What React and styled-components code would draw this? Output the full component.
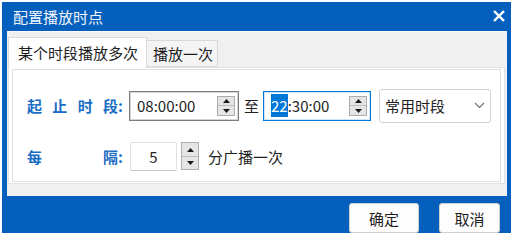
import React from 'react';
import styled, { createGlobalStyle } from 'styled-components';

const GlobalStyle = createGlobalStyle`
  html, body {
    margin: 0;
    padding: 0;
    background: #ffffff;
  }
  body {
    font-family: "Noto Sans CJK SC", "Noto Sans", sans-serif;
    color: #222;
    white-space: nowrap;
  }
`;

const Dialog = styled.div`
  margin: 2px 0 0 2px;
  width: 509px;
  height: 231px;
  background: #0560bd;
  display: flex;
  flex-direction: column;
`;
const TitleBar = styled.div`
  height: 29px;
  display: flex;
  align-items: center;
  justify-content: space-between;
  padding: 0 5px 0 11px;
  color: #f2f6fc;
  font-size: 15px;
`;
const CloseButton = styled.div`
  width: 14px;
  height: 14px;
  display: flex;
  align-items: center;
  justify-content: center;
`;
const Body = styled.div`
  margin: 0 4px 0 5px;
  height: 160px;
  background: #f0f0f0;
  border-top: 1px solid #fbfbfb;
  padding: 5px 2px 0 1px;
  display: flex;
  flex-direction: column;
`;
const TabStrip = styled.div`
  display: flex;
  align-items: flex-end;
  height: 30px;
  position: relative;
  z-index: 1;
`;
const Tab = styled.div`
  box-sizing: border-box;
  flex-shrink: 0;
  height: ${(p) => (p.$active ? '31px' : '27px')};
  margin-bottom: ${(p) => (p.$active ? '-1px' : '0')};
  padding: ${(p) => (p.$active ? '0 0 0 9px' : '0 0 0 6px')};
  width: ${(p) => p.$width}px;
  background: ${(p) => (p.$active ? '#ffffff' : '#f4f4f4')};
  border: 1px solid #d9d9d9;
  border-bottom: ${(p) => (p.$active ? 'none' : '1px solid #d9d9d9')};
  border-left: ${(p) => (p.$first ? '1px solid #d9d9d9' : 'none')};
  display: flex;
  align-items: center;
  font-size: 15px;
  color: #1e1e1e;
`;
const Page = styled.div`
  height: 117px;
  box-sizing: border-box;
  background: #ffffff;
  border: 1px solid #e2e2e2;
  padding: 1px 3px 1px 3px;
  display: flex;
`;
const Frame = styled.div`
  flex: 1;
  box-sizing: border-box;
  border: 1px solid #dedede;
  padding: 19px 0 0 14px;
  display: flex;
  flex-direction: column;
  gap: 19px;
`;
const Row = styled.div`
  display: flex;
  align-items: center;
  height: ${(p) => p.$h}px;
`;
const Label = styled.div`
  width: 96px;
  display: flex;
  justify-content: space-between;
  font-size: 15px;
  font-weight: bold;
  color: #1a6dc6;
`;
const TimeBox = styled.div`
  box-sizing: border-box;
  width: ${(p) => p.$w}px;
  height: 30px;
  margin-left: ${(p) => p.$ml}px;
  background: #fff;
  border: 1px solid ${(p) => (p.$focused ? '#0078d7' : '#7d7d7d')};
  box-shadow: inset 0 0 0 1px ${(p) => (p.$focused ? '#cfe3f7' : '#d4d4d4')};
  display: flex;
  align-items: center;
  padding: 0 3px 0 7px;
  font-size: 15px;
`;
const TimeText = styled.div`
  flex: 1;
  color: #222;
`;
const Selected = styled.span`
  background: #0078d7;
  color: #fff;
  padding: 1px 0;
`;
const Spin = styled.div`
  box-sizing: border-box;
  width: 18px;
  height: ${(p) => p.$h}px;
  margin-left: ${(p) => p.$ml || 0}px;
  border: 1px solid #adadad;
  background: #e5e5e5;
  display: flex;
  flex-direction: column;
`;
const SpinHalf = styled.div`
  flex: 1;
  display: flex;
  align-items: center;
  justify-content: center;
  border-top: ${(p) => (p.$lower ? '1px solid #bdbdbd' : 'none')};
`;
const Joiner = styled.span`
  font-size: 15px;
  margin: 0 4px 0 5px;
`;
const Select = styled.div`
  box-sizing: border-box;
  width: 112px;
  height: 34px;
  margin-left: 8px;
  border: 1px solid #d3d3d3;
  border-radius: 3px;
  background: #fff;
  display: flex;
  align-items: center;
  justify-content: space-between;
  padding: 0 5px 0 5px;
  font-size: 15px;
`;
const NumberBox = styled.div`
  box-sizing: border-box;
  width: 47px;
  height: 29px;
  margin-left: 7px;
  border: 1px solid #e0e0e0;
  border-bottom-color: #c4c4c4;
  border-radius: 2px;
  display: flex;
  align-items: center;
  justify-content: center;
  font-size: 15px;
`;
const Unit = styled.span`
  font-size: 15px;
  margin-left: 9px;
`;
const Footer = styled.div`
  flex: 1;
  display: flex;
  justify-content: flex-end;
  align-items: flex-start;
  gap: 20px;
  padding: 7px 11px 0 0;
`;
const Button = styled.div`
  box-sizing: border-box;
  width: ${(p) => p.$w}px;
  height: 30px;
  background: #fdfdfd;
  border: 1px solid #cfcfcf;
  border-radius: 3px;
  display: flex;
  align-items: center;
  justify-content: center;
  font-size: 15px;
  color: #1e1e1e;
`;

const Arrow = ({ down }) => (
  <svg width="7" height="4" viewBox="0 0 7 4">
    <polygon points={down ? '0,0 7,0 3.5,4' : '0,4 7,4 3.5,0'} fill="#1a1a1a" />
  </svg>
);

const Spinner = ({ h, ml }) => (
  <Spin $h={h} $ml={ml}>
    <SpinHalf><Arrow /></SpinHalf>
    <SpinHalf $lower><Arrow down /></SpinHalf>
  </Spin>
);

const App = () => (
  <>
    <GlobalStyle />
    <Dialog>
      <TitleBar>
        <span>配置播放时点</span>
        <CloseButton>
          <svg width="12" height="12" viewBox="0 0 12 12">
            <path d="M1 1 L11 11 M11 1 L1 11" stroke="#fff" strokeWidth="2.4" />
          </svg>
        </CloseButton>
      </TitleBar>
      <Body>
        <TabStrip>
          <Tab $active $first $width={139}>某个时段播放多次</Tab>
          <Tab $width={71}>播放一次</Tab>
        </TabStrip>
        <Page>
          <Frame>
            <Row $h={34}>
              <Label><span>起</span><span>止</span><span>时</span><span>段:</span></Label>
              <TimeBox $w={110} $ml={6}>
                <TimeText>08:00:00</TimeText>
                <Spinner h={20} />
              </TimeBox>
              <Joiner>至</Joiner>
              <TimeBox $w={108} $ml={0} $focused>
                <TimeText><Selected>22</Selected>:30:00</TimeText>
                <Spinner h={20} />
              </TimeBox>
              <Select>
                <span>常用时段</span>
                <svg width="11" height="7" viewBox="0 0 11 7">
                  <polyline points="1,1 5.5,5.5 10,1" fill="none" stroke="#6d6d6d" strokeWidth="1.1" />
                </svg>
              </Select>
            </Row>
            <Row $h={29}>
              <Label><span>每</span><span>隔:</span></Label>
              <NumberBox>5</NumberBox>
              <Spinner h={28} ml={4} />
              <Unit>分广播一次</Unit>
            </Row>
          </Frame>
        </Page>
      </Body>
      <Footer>
        <Button $w={70}>确定</Button>
        <Button $w={61}>取消</Button>
      </Footer>
    </Dialog>
  </>
);

export default App;
